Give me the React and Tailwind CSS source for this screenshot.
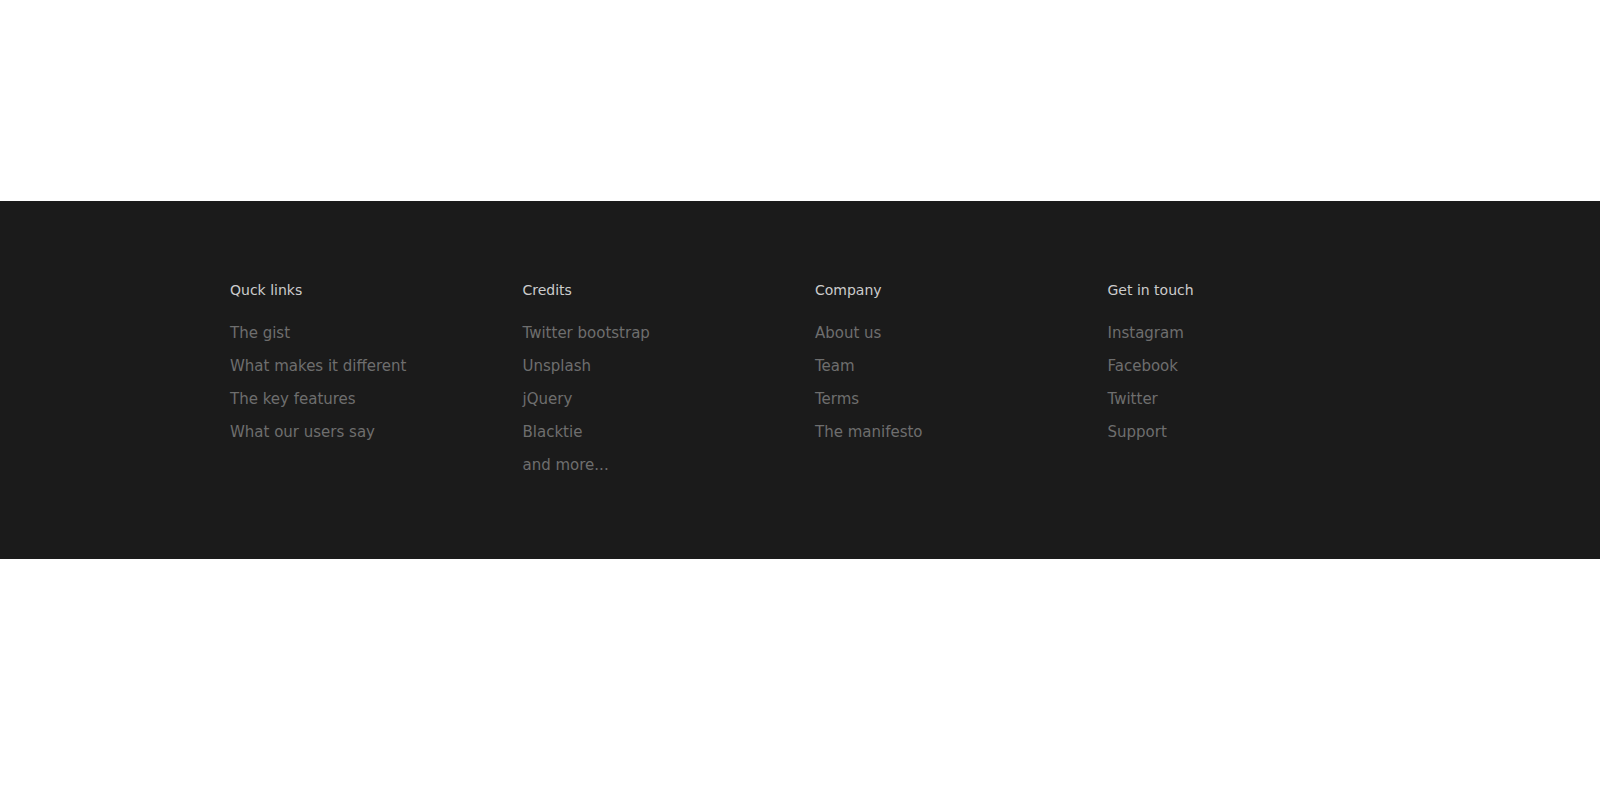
export default function App() {
  const cols = [
    { title: "Quck links", links: ["The gist", "What makes it different", "The key features", "What our users say"] },
    { title: "Credits", links: ["Twitter bootstrap", "Unsplash", "jQuery", "Blacktie", "and more..."] },
    { title: "Company", links: ["About us", "Team", "Terms", "The manifesto"] },
    { title: "Get in touch", links: ["Instagram", "Facebook", "Twitter", "Support"] },
  ];
  return (
    <div className="min-h-[793px] bg-white" style={{ fontFamily: '"DejaVu Sans", sans-serif' }}>
      <div className="h-[201px]" />
      <footer className="bg-[#1b1b1b] pt-[79px] pb-[77px]">
        <div className="mx-auto w-[1170px] flex">
          {cols.map((c) => (
            <div key={c.title} className="w-[292.5px] px-[15px]">
              <h4 className="text-[14px] leading-[20px] font-medium text-[#cccccc]">{c.title}</h4>
              <ul className="mt-[17px]">
                {c.links.map((l) => (
                  <li key={l} className="text-[15px] leading-[33px] text-[#6e6e6e]">
                    <a href="#">{l}</a>
                  </li>
                ))}
              </ul>
            </div>
          ))}
        </div>
      </footer>
    </div>
  );
}
